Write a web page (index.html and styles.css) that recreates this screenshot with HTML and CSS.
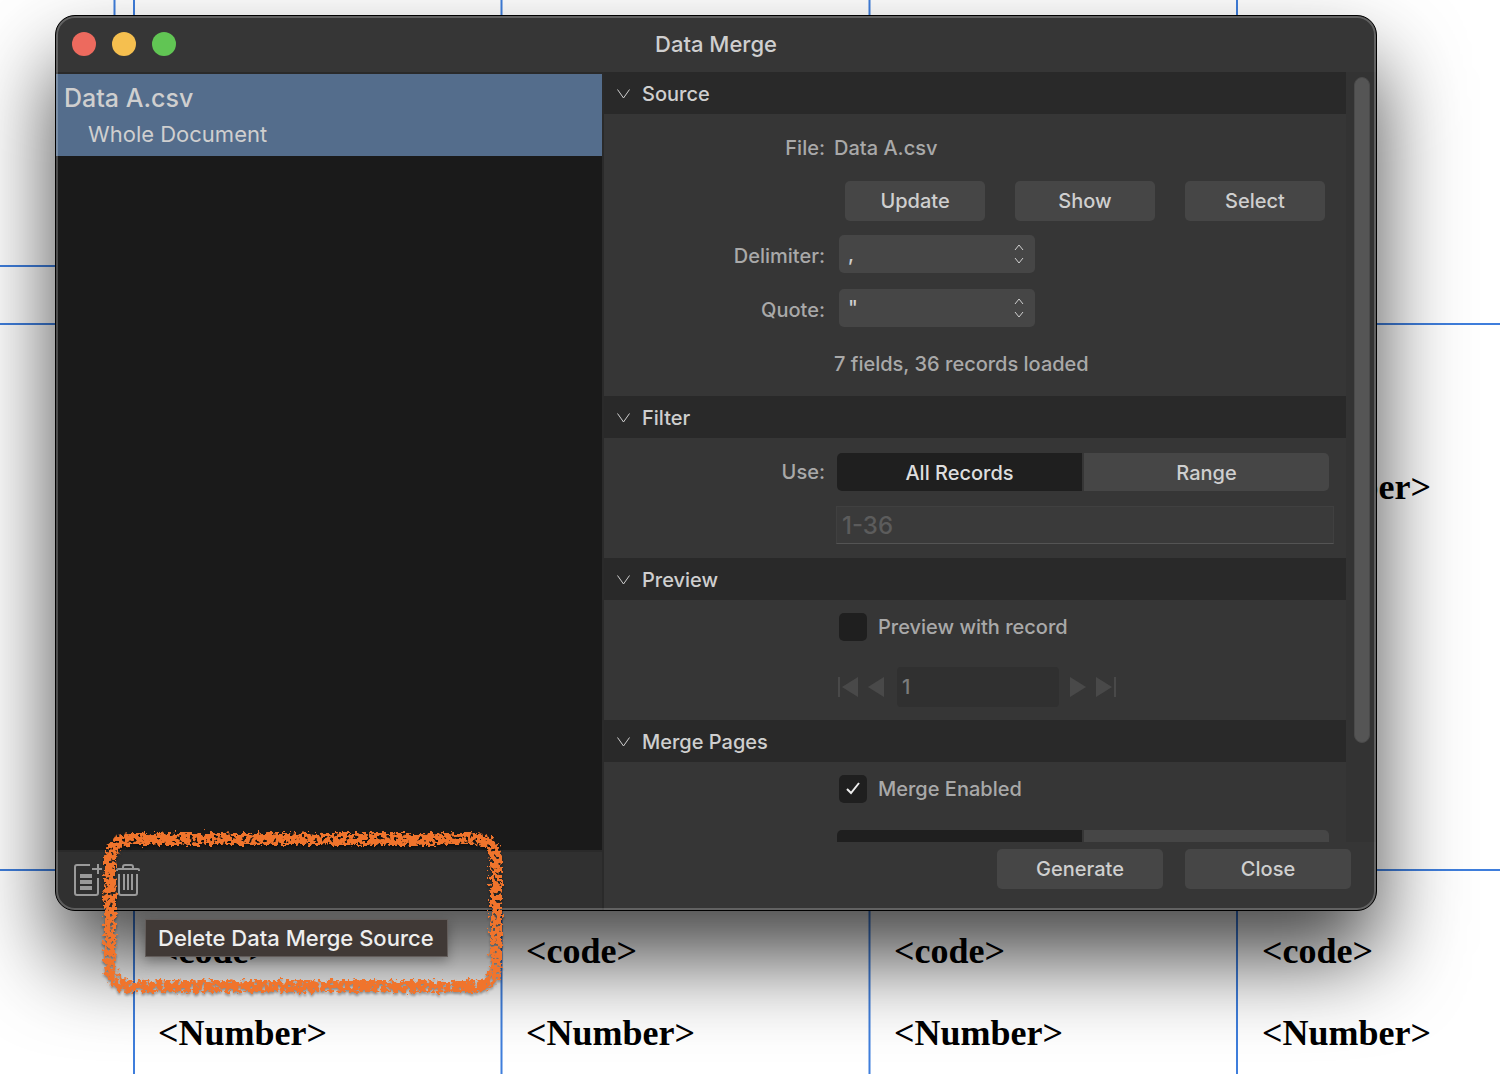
FILE: index.html
```html
<!DOCTYPE html>
<html lang="en">
    <head>
        <meta charset="UTF-8" />
        <meta name="viewport" content="width=device-width, initial-scale=1.0" />
        <title>Data Merge</title>
        <link rel="stylesheet" href="styles.css">
    </head>
    <body>
        <!-- Document canvas with its guides and merge fields -->
        <div class="canvas">
            <svg class="guides" width="100%" height="100%" aria-hidden="true">
                <path d="M114.5 0V400M134 0V1074M501.5 0V1074M869.5 0V1074M1237 0V1074" />
                <path d="M0 266H400M0 324H2000M0 870H2000" />
            </svg>
            <span class="field-text col-4 line-1">&lt;Number&gt;</span>
            <span class="field-text col-1 line-2">&lt;code&gt;</span>
            <span class="field-text col-2 line-2">&lt;code&gt;</span>
            <span class="field-text col-3 line-2">&lt;code&gt;</span>
            <span class="field-text col-4 line-2">&lt;code&gt;</span>
            <span class="field-text col-1 line-3">&lt;Number&gt;</span>
            <span class="field-text col-2 line-3">&lt;Number&gt;</span>
            <span class="field-text col-3 line-3">&lt;Number&gt;</span>
            <span class="field-text col-4 line-3">&lt;Number&gt;</span>
        </div>

        <main class="window">
            <header class="titlebar">
                <div class="lights">
                    <button class="light red" aria-label="Close window"></button>
                    <button class="light yellow" aria-label="Minimize"></button>
                    <button class="light green" aria-label="Zoom"></button>
                </div>
                <h1>Data Merge</h1>
            </header>

            <div class="panes">
                <aside class="sources">
                    <ul class="source-list">
                        <li class="source selected">
                            <div class="source-name">Data A.csv</div>
                            <div class="source-scope">Whole Document</div>
                        </li>
                    </ul>
                    <div class="toolbar">
                        <button class="tool" aria-label="Add Data Merge Source">
                            <svg width="28" height="34" viewBox="0 0 28 34">
                                <path d="M16 2H3Q1 2 1 4V30Q1 32 3 32H22Q24 32 24 30V15M24 1V11M18 6H28" />
                                <path class="thick" d="M6 13H18M6 19H18M6 25H18" />
                            </svg>
                        </button>
                        <button class="tool" aria-label="Delete Data Merge Source">
                            <svg width="26" height="34" viewBox="0 0 26 34">
                                <path d="M2 8V7Q2 6 3 6H23Q24 6 24 7V8M8 6V4Q8 2 10 2H16Q18 2 18 4V6M4 11V30Q4 32 6 32H20Q22 32 22 30V11M9 11V27M13 11V27M17 11V27" />
                            </svg>
                        </button>
                    </div>
                </aside>

                <section class="settings">
                    <div class="scroller">
                        <div class="sections">
                            <details open>
                                <summary>
                                    <svg width="13" height="10" viewBox="0 0 13 10"><path d="M0.5 0.5L6.5 9L12.5 0.5" /></svg>
                                    Source
                                </summary>
                                <div class="rows">
                                    <div class="row">
                                        <span class="label">File:</span>
                                        <span>Data A.csv</span>
                                    </div>
                                    <div class="row">
                                        <div class="buttons">
                                            <button class="button">Update</button>
                                            <button class="button">Show</button>
                                            <button class="button">Select</button>
                                        </div>
                                    </div>
                                    <div class="row">
                                        <label class="label" for="delimiter">Delimiter:</label>
                                        <div class="dropdown">
                                            <select id="delimiter">
                                                <option>,</option>
                                                <option>;</option>
                                            </select>
                                            <svg width="10" height="20" viewBox="0 0 10 20"><path d="M1 6L5 1L9 6M1 14L5 19L9 14" /></svg>
                                        </div>
                                    </div>
                                    <div class="row">
                                        <label class="label" for="quote">Quote:</label>
                                        <div class="dropdown">
                                            <select id="quote">
                                                <option>"</option>
                                                <option>'</option>
                                            </select>
                                            <svg width="10" height="20" viewBox="0 0 10 20"><path d="M1 6L5 1L9 6M1 14L5 19L9 14" /></svg>
                                        </div>
                                    </div>
                                    <div class="row">
                                        <output class="value">7 fields, 36 records loaded</output>
                                    </div>
                                </div>
                            </details>

                            <details open>
                                <summary>
                                    <svg width="13" height="10" viewBox="0 0 13 10"><path d="M0.5 0.5L6.5 9L12.5 0.5" /></svg>
                                    Filter
                                </summary>
                                <div class="rows">
                                    <div class="row">
                                        <span class="label" id="use">Use:</span>
                                        <div class="segments" role="radiogroup" aria-labelledby="use">
                                            <label><input type="radio" name="use" checked /><span>All Records</span></label>
                                            <label><input type="radio" name="use" /><span>Range</span></label>
                                        </div>
                                    </div>
                                    <div class="row">
                                        <input class="range" type="text" placeholder="1-36" aria-label="Record range" disabled />
                                    </div>
                                </div>
                            </details>

                            <details open>
                                <summary>
                                    <svg width="13" height="10" viewBox="0 0 13 10"><path d="M0.5 0.5L6.5 9L12.5 0.5" /></svg>
                                    Preview
                                </summary>
                                <div class="rows spaced">
                                    <div class="row">
                                        <label class="check"><input type="checkbox" />Preview with record</label>
                                    </div>
                                    <div class="row">
                                        <div class="pager">
                                            <button aria-label="First record" disabled>
                                                <svg width="20" height="20" viewBox="0 0 20 20"><path d="M0 0H2V20H0ZM20 0V20L4 10Z" /></svg>
                                            </button>
                                            <button aria-label="Previous record" disabled>
                                                <svg width="16" height="20" viewBox="0 0 16 20"><path d="M16 0V20L0 10Z" /></svg>
                                            </button>
                                            <input type="text" value="1" aria-label="Record" disabled />
                                            <button aria-label="Next record" disabled>
                                                <svg width="16" height="20" viewBox="0 0 16 20"><path d="M0 0V20L16 10Z" /></svg>
                                            </button>
                                            <button aria-label="Last record" disabled>
                                                <svg width="20" height="20" viewBox="0 0 20 20"><path d="M18 0H20V20H18ZM0 0V20L16 10Z" /></svg>
                                            </button>
                                        </div>
                                    </div>
                                </div>
                            </details>

                            <details open>
                                <summary>
                                    <svg width="13" height="10" viewBox="0 0 13 10"><path d="M0.5 0.5L6.5 9L12.5 0.5" /></svg>
                                    Merge Pages
                                </summary>
                                <div class="rows spaced">
                                    <div class="row">
                                        <label class="check">
                                            <input type="checkbox" checked />
                                            <svg class="tick" width="16" height="14" viewBox="0 0 16 14"><path d="M2 7L6 11L14 1" /></svg>
                                            Merge Enabled
                                        </label>
                                    </div>
                                    <div class="row">
                                        <div class="segments" role="radiogroup" aria-label="Merge mode">
                                            <label><input type="radio" name="mode" checked /><span></span></label>
                                            <label><input type="radio" name="mode" /><span></span></label>
                                        </div>
                                    </div>
                                </div>
                            </details>
                        </div>
                        <div class="track"><div class="thumb"></div></div>
                    </div>
                    <footer class="actions">
                        <button class="button">Generate</button>
                        <button class="button">Close</button>
                    </footer>
                </section>
            </div>
        </main>

        <div class="tooltip" role="tooltip">Delete Data Merge Source</div>

        <!-- Crayon outline round the delete button -->
        <svg class="marker" width="420" height="180" viewBox="0 0 420 180" aria-hidden="true">
            <defs>
                <filter id="crayon" x="0" y="0" width="420" height="180" filterUnits="userSpaceOnUse" color-interpolation-filters="sRGB">
                    <feTurbulence type="fractalNoise" baseFrequency="0.25" numOctaves="3" seed="4" result="noise" />
                    <feDisplacementMap in="SourceGraphic" in2="noise" scale="10" xChannelSelector="R" yChannelSelector="G" result="rough" />
                    <feColorMatrix in="noise" type="matrix" values="0 0 0 0 0  0 0 0 0 0  0 0 0 0 0  0 0 12 0 -4" result="grain" />
                    <feComposite in="rough" in2="grain" operator="in" result="line" />
                    <feDropShadow in="line" dx="0" dy="2" stdDeviation="1" flood-opacity="0.35" />
                </filter>
            </defs>
            <rect x="20" y="19" width="386" height="147" rx="20" filter="url(#crayon)" />
        </svg>
    </body>
</html>
```
FILE: styles.css
```css
* {
    box-sizing: border-box;
}
body {
    position: relative;
    height: 100vh;
    margin: 0;
    overflow: hidden;
    background-color: white;
    color: #a9a9a9;
    font-family: Inter, "Liberation Sans", sans-serif;
    font-size: 20px;
    font-weight: 450;
    line-height: 24px;
}
button,
input,
select {
    margin: 0;
    border: 0;
    padding: 0;
    font: inherit;
    color: inherit;
    background: none;
}
svg {
    display: block;
    fill: none;
}

/* Canvas */
.canvas {
    position: absolute;
    inset: 0;
}
.guides {
    stroke: #3f7edc;
    stroke-width: 2;
}
.field-text {
    position: absolute;
    color: black;
    font: bold 36px/40px "Liberation Serif", serif;
}
.col-1 { left: 158px; }
.col-2 { left: 526px; }
.col-3 { left: 894px; }
.col-4 { left: 1262px; }
.line-1 { top: 467px; }
.line-2 { top: 931px; }
.line-3 { top: 1013px; }

/* Window */
.window {
    position: absolute;
    inset: 15px 123px 163px 55px;
    display: flex;
    flex-direction: column;
    border: 1px solid black;
    border-radius: 20px;
    overflow: hidden;
    background-color: #363636;
    box-shadow: 0 48px 86px rgba(0, 0, 0, 0.72);
}
.window::after {
    content: "";
    position: absolute;
    inset: 0;
    border: 2px solid rgba(255, 255, 255, 0.22);
    border-radius: 19px;
    pointer-events: none;
}
.titlebar {
    display: grid;
    grid-template-columns: 1fr auto 1fr;
    align-items: center;
    flex: none;
    height: 56px;
    padding: 0 16px;
}
.titlebar h1 {
    margin: 0;
    color: #cfcfcf;
    font-size: 22px;
    font-weight: 450;
}
.lights {
    display: flex;
    gap: 16px;
}
.light {
    width: 24px;
    height: 24px;
    border-radius: 50%;
}
.red { background-color: #ed6a5e; }
.yellow { background-color: #f5bf4f; }
.green { background-color: #61c554; }
.panes {
    display: grid;
    grid-template-columns: 137fr 193fr;
    flex: 1;
    min-height: 0;
}

/* Source list */
.sources {
    display: flex;
    flex-direction: column;
    border-top: 2px solid #2a2a2a;
    border-right: 2px solid #2a2a2a;
}
.source-list {
    flex: 1;
    margin: 0;
    padding: 0;
    list-style: none;
    background-color: #1a1a1a;
}
.source {
    padding: 6px 8px 4px;
    color: #cfcfcf;
}
.selected {
    background-color: #546d8c;
}
.source-name {
    font-size: 25px;
    line-height: 36px;
}
.source-scope {
    padding-left: 24px;
    font-size: 22px;
    font-weight: 400;
    line-height: 36px;
}
.toolbar {
    display: flex;
    gap: 13px;
    height: 60px;
    padding: 11px 18px;
    border-top: 2px solid #2a2a2a;
    background-color: #303030;
}
.tool {
    height: 34px;
    stroke: #9a9a9a;
    stroke-width: 2;
}
.thick {
    stroke-width: 4;
}

/* Settings */
.settings {
    display: flex;
    flex-direction: column;
    min-height: 0;
}
.scroller {
    display: flex;
    flex: 1;
    min-height: 0;
}
.sections {
    flex: 1;
    overflow: hidden;
}
.track {
    width: 30px;
    padding: 5px 6px 5px 8px;
    background-color: #333333;
}
.thumb {
    height: 666px;
    max-height: 100%;
    border: 1px solid #4a4a4a;
    border-radius: 8px;
    background-color: #555555;
}
summary {
    display: flex;
    align-items: center;
    gap: 12px;
    height: 42px;
    padding: 2px 13px 0;
    background-color: #292929;
    color: #cfcfcf;
}
summary svg {
    stroke: #cfcfcf;
    stroke-width: 1;
}
.rows {
    padding: 7px 12px 5px 0;
}
.rows.spaced {
    display: grid;
    gap: 6px;
    padding: 0 12px 6px 0;
}
.row {
    display: grid;
    grid-template-columns: 221px 1fr;
    column-gap: 9px;
    align-items: center;
    height: 54px;
}
.row > :last-child {
    grid-column: 2;
}
.label {
    text-align: right;
}
.button {
    width: 140px;
    height: 40px;
    border-radius: 5px;
    background-color: #464646;
    color: #cfcfcf;
}
.buttons {
    display: flex;
    gap: 30px;
    padding: 0 0 2px 11px;
}
.dropdown {
    position: relative;
    width: 196px;
    height: 38px;
    margin: 0 5px 4px;
}
.dropdown select {
    width: 100%;
    height: 100%;
    padding: 0 9px;
    appearance: none;
    border-radius: 5px;
    background-color: #464646;
    color: #cfcfcf;
}
.dropdown svg {
    position: absolute;
    top: 9px;
    right: 11px;
    stroke: #cfcfcf;
    stroke-width: 1;
    pointer-events: none;
}
.segments {
    display: grid;
    grid-template-columns: 1fr 1fr;
    gap: 2px;
    height: 38px;
    margin: 0 5px 0 3px;
    border-radius: 5px;
    overflow: hidden;
}
.segments input {
    position: absolute;
    opacity: 0;
}
.segments span {
    display: block;
    height: 38px;
    background-color: #464646;
    color: #cfcfcf;
    line-height: 40px;
    text-align: center;
}
.segments input:checked + span {
    background-color: #1f1f1f;
    color: #dedede;
}
.range {
    height: 38px;
    margin: 0 0 2px 2px;
    padding: 0 5px;
    border: 1px solid #404040;
    border-bottom: 1px solid #545454;
    background-color: #3a3a3a;
    font-size: 24px;
}
.range::placeholder {
    color: #5c5c5c;
}
.check {
    position: relative;
    display: flex;
    align-items: center;
    gap: 11px;
    padding-left: 5px;
}
.check input {
    width: 28px;
    height: 28px;
    appearance: none;
    border-radius: 5px;
    background-color: #1f1f1f;
}
.tick {
    position: absolute;
    left: 11px;
    stroke: #eeeeee;
    stroke-width: 2;
}
.pager {
    display: flex;
    align-items: center;
    gap: 10px;
    padding-left: 4px;
}
.pager svg {
    fill: #494949;
}
.pager input {
    width: 162px;
    height: 40px;
    margin: 0 1px 0 3px;
    padding: 0 5px;
    border-radius: 4px;
    background-color: #303030;
    color: #7c7c7c;
}
.actions {
    display: flex;
    justify-content: flex-end;
    gap: 22px;
    height: 68px;
    padding: 7px 25px;
}
.actions .button {
    width: 166px;
}

/* Overlays */
.tooltip {
    position: absolute;
    top: 919px;
    left: 145px;
    padding: 3px 13px 3px 12px;
    border: 1px solid #625c5a;
    background-color: #403936;
    color: #eeeeee;
    font-size: 22px;
    font-weight: 500;
    line-height: 30px;
    box-shadow: 0 4px 12px rgba(0, 0, 0, 0.3);
}
.marker {
    position: absolute;
    top: 820px;
    left: 90px;
    stroke: #f0742c;
    stroke-width: 12;
    pointer-events: none;
}
```
